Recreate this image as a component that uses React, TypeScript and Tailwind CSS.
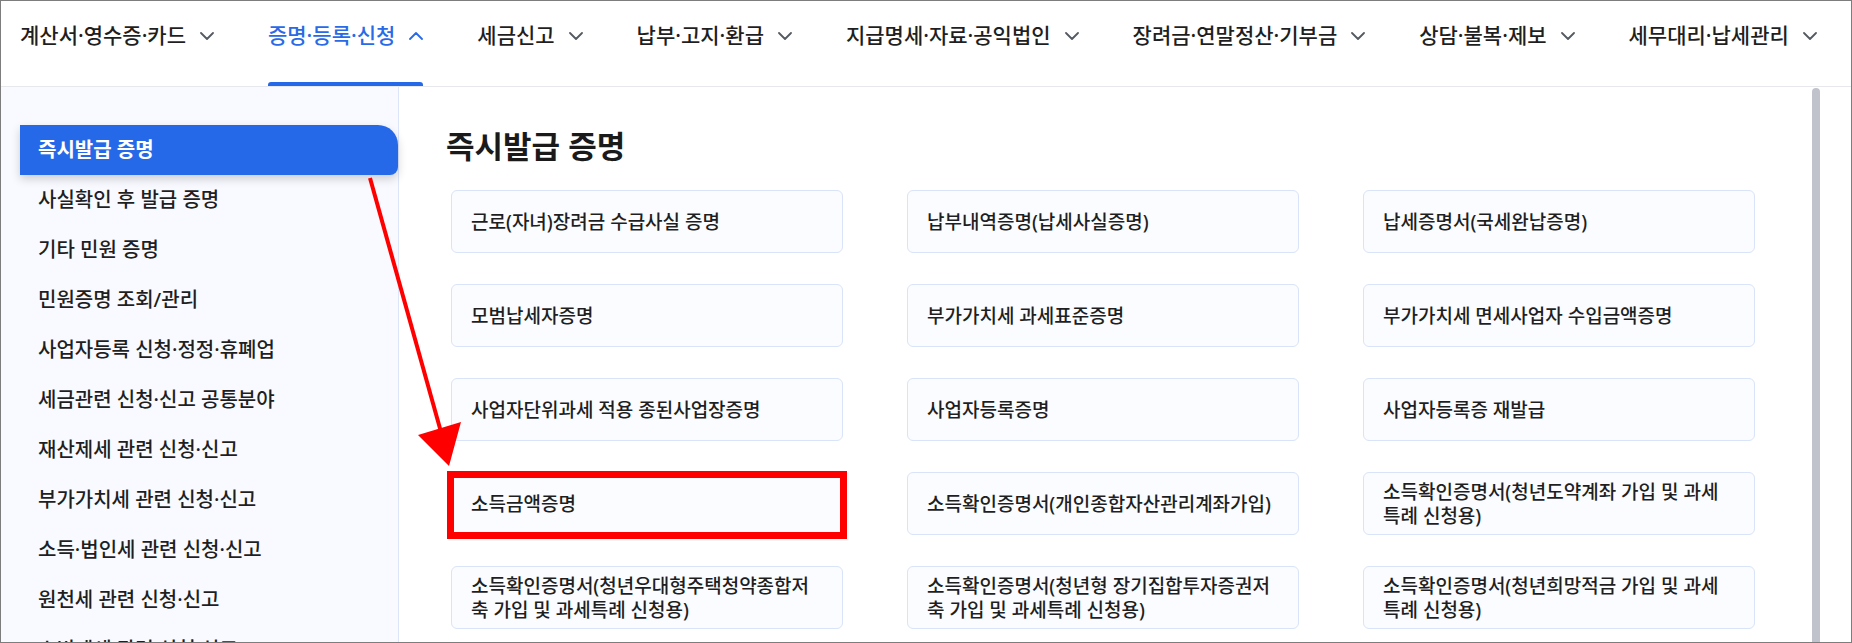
import React from 'react';

const navItems = [
  { label: '계산서·영수증·카드' },
  { label: '증명·등록·신청', active: true },
  { label: '세금신고' },
  { label: '납부·고지·환급' },
  { label: '지급명세·자료·공익법인' },
  { label: '장려금·연말정산·기부금' },
  { label: '상담·불복·제보' },
  { label: '세무대리·납세관리' },
];

const sideItems = [
  '즉시발급 증명',
  '사실확인 후 발급 증명',
  '기타 민원 증명',
  '민원증명 조회/관리',
  '사업자등록 신청·정정·휴폐업',
  '세금관련 신청·신고 공통분야',
  '재산제세 관련 신청·신고',
  '부가가치세 관련 신청·신고',
  '소득·법인세 관련 신청·신고',
  '원천세 관련 신청·신고',
  '소비제세 관련 신청·신고',
];

// lines split the same way the reference wraps them
const certs: { lines: string[]; marked?: boolean }[] = [
  { lines: ['근로(자녀)장려금 수급사실 증명'] },
  { lines: ['납부내역증명(납세사실증명)'] },
  { lines: ['납세증명서(국세완납증명)'] },
  { lines: ['모범납세자증명'] },
  { lines: ['부가가치세 과세표준증명'] },
  { lines: ['부가가치세 면세사업자 수입금액증명'] },
  { lines: ['사업자단위과세 적용 종된사업장증명'] },
  { lines: ['사업자등록증명'] },
  { lines: ['사업자등록증 재발급'] },
  { lines: ['소득금액증명'], marked: true },
  { lines: ['소득확인증명서(개인종합자산관리계좌가입)'] },
  { lines: ['소득확인증명서(청년도약계좌 가입 및 과세', '특례 신청용)'] },
  { lines: ['소득확인증명서(청년우대형주택청약종합저', '축 가입 및 과세특례 신청용)'] },
  { lines: ['소득확인증명서(청년형 장기집합투자증권저', '축 가입 및 과세특례 신청용)'] },
  { lines: ['소득확인증명서(청년희망적금 가입 및 과세', '특례 신청용)'] },
];

function Chevron({ up, active }: { up?: boolean; active?: boolean }) {
  return (
    <svg width="14" height="8" viewBox="0 0 14 8" fill="none" className={active ? 'text-[#2a6ae6]' : 'text-[#555a62]'}>
      <polyline
        points={up ? '1,7 7,1 13,7' : '1,1 7,7 13,1'}
        stroke="currentColor"
        strokeWidth="1.8"
        strokeLinecap="round"
        strokeLinejoin="round"
      />
    </svg>
  );
}

export default function App() {
  return (
    <div className="relative h-[643px] w-[1852px] overflow-hidden border border-[#7d7d7d] bg-white font-['Noto_Sans','Noto_Sans_CJK_KR',sans-serif] text-[#1f1f1f]">
      <nav className="flex h-[86px] items-stretch gap-[54px] border-b border-[#e6e8ec] pl-[19px]">
        {navItems.map((item) => (
          <div
            key={item.label}
            className={`relative flex items-center gap-[14px] pb-[16px] text-[21px] font-medium ${
              item.active ? 'text-[#2a6ae6]' : 'text-[#1f1f1f]'
            }`}
          >
            <span className="whitespace-nowrap">{item.label}</span>
            <Chevron up={item.active} active={item.active} />
            {item.active ? <span className="absolute inset-x-0 bottom-0 h-[4px] rounded-t-[3px] bg-[#2669e8]" /> : null}
          </div>
        ))}
      </nav>

      <div className="flex h-[555px]">
        <aside className="w-[398px] shrink-0 border-r border-[#dce6f8] bg-[#f8faff] pt-[38px]">
          {sideItems.map((label, index) =>
            index === 0 ? (
              <div
                key={label}
                className="ml-[19px] flex h-[50px] items-center rounded-tr-[20px] rounded-br-[8px] bg-[#2669e8] pl-[18px] text-[20px] font-bold text-white shadow-[0_4px_10px_rgba(0,0,0,0.18)]"
              >
                {label}
              </div>
            ) : (
              <div key={label} className="ml-[19px] flex h-[50px] items-center pl-[18px] text-[20px] font-medium whitespace-nowrap">
                {label}
              </div>
            ),
          )}
        </aside>

        <main className="relative flex-1 pl-[47px] pt-[40px]">
          <h1 className="text-[31px] leading-[38px] font-bold text-[#1a1a1a]">즉시발급 증명</h1>

          <div className="mt-[25px] ml-[5px] grid grid-cols-[392px_392px_392px] gap-x-[64px] gap-y-[31px]">
            {certs.map((cert) => (
              <div key={cert.lines.join('')} className="relative">
                <div className="flex h-[63px] items-center rounded-[6px] border border-[#d9e4f8] bg-[#fafcff] px-[19px] text-[19px] leading-[24px] font-medium">
                  <span>
                    {cert.lines.map((line) => (
                      <span key={line} className="block whitespace-nowrap">
                        {line}
                      </span>
                    ))}
                  </span>
                </div>
                {cert.marked ? <div className="absolute -top-[1px] -right-[4px] -bottom-[4px] -left-[4px] border-[7px] border-[#ff0000]" /> : null}
              </div>
            ))}
          </div>

          <div className="absolute top-px right-[31px] bottom-0 w-[8px] rounded-t-full bg-[#c1c3cc]" />
        </main>
      </div>

      <svg className="pointer-events-none absolute top-[-1px] left-[-1px]" width="1852" height="643" viewBox="0 0 1852 643">
        <line x1="370" y1="178" x2="441" y2="432" stroke="#ff0000" strokeWidth="4" />
        <polygon points="449,466 418,435 461,422" fill="#ff0000" />
      </svg>
    </div>
  );
}
